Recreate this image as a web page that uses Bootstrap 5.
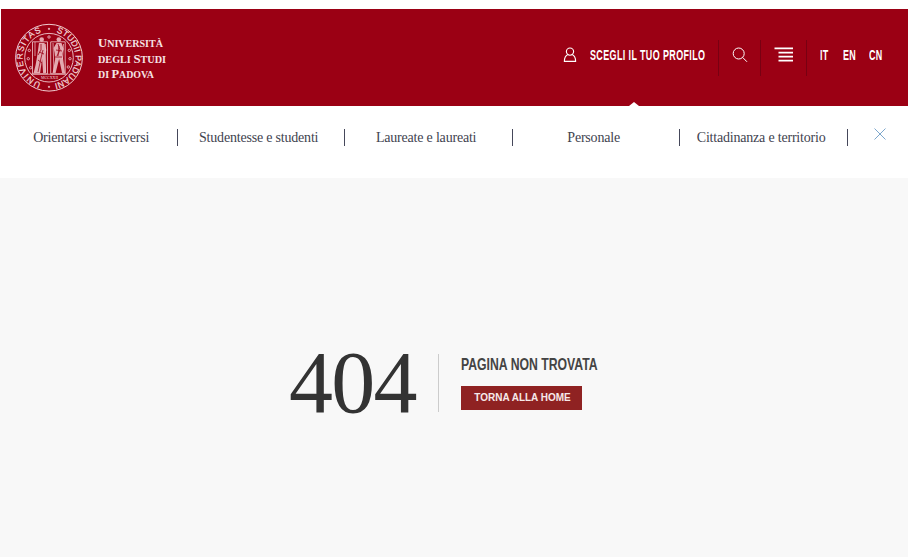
<!DOCTYPE html>
<html lang="it">
<head>
<meta charset="utf-8">
<meta name="viewport" content="width=device-width, initial-scale=1">
<title>Università degli Studi di Padova - 404</title>
<link rel="stylesheet" href="https://cdn.jsdelivr.net/npm/bootstrap@5.3.0/dist/css/bootstrap.min.css">
<style>
body{background:#fff;font-family:"Liberation Sans",Arial,sans-serif;height:557px;overflow:hidden}
.topbar{background:#9b0014;height:97px;margin:9px 0 0 1px;padding:0 26px 0 13px}
.tools{height:38px}
.narrow{flex:none;font-weight:700;font-size:14px;line-height:16px;letter-spacing:.6px;white-space:nowrap;color:#fff;text-decoration:none;margin-top:-5px}
.narrow:hover{color:#fff}
.narrow span{display:block;transform:scaleX(.64);transform-origin:0 50%}
.profile-icon{margin:-5px 13px 0 0}
.profile-label{width:115px;margin-right:13px}
.lang-it{width:23px;margin-left:13px}
.lang-en{width:26px}
.lang-cn{width:13px}
.tool-icon{flex:none;margin-top:-5px}
.sep{flex:none;width:1px;height:36px;background:#780012}
.pointer{left:628px;bottom:0;width:10px;height:4px}
.profiles{height:72px;padding-left:10.4px}
.profiles ul{margin-top:23px}
.profiles li{width:167.5px;height:17px;border-right:1px solid #45475a;padding-right:5px;text-align:center;line-height:16px}
.profiles li a{font:14px/16px "Liberation Serif","Times New Roman",serif;letter-spacing:-.2px;color:#41434f;text-decoration:none;white-space:nowrap}
.close-x{margin:22px 0 0 26px;line-height:0}
main{background:#f8f8f8;height:379px;padding:175px 0 0 289px}
.code{font:88px/60px "Liberation Serif","Times New Roman",serif;color:#333;width:127px;letter-spacing:-1.8px;margin:0}
.message{border-left:1px solid #ccc;margin-left:22px;padding-left:22px;height:58px;margin-top:1px}
.message h2{font-size:16.5px;line-height:20px;font-weight:700;color:#444;white-space:nowrap;transform:scaleX(.742);transform-origin:0 50%;width:137px;margin:0 0 12px}
.home-btn{background:#8f2222;color:#f6e9e9;border-radius:0;width:121px;height:24px;font-size:10px;line-height:24px;font-weight:700;padding:0 0 0 2px;white-space:nowrap;border:0}
.home-btn:hover{background:#8f2222;color:#fff}
</style>
<script src="https://cdn.jsdelivr.net/npm/bootstrap@5.3.0/dist/js/bootstrap.bundle.min.js"></script>
</head>
<body>
<header class="topbar d-flex align-items-center position-relative">
  <a href="#" class="d-block lh-1" aria-label="Università degli Studi di Padova">
    <svg width="160" height="72" viewBox="0 0 160 72" fill="none" stroke="#f0ccd0">
      <defs><path id="ring" d="M35 35.7m0 26.4a26.4 26.4 0 1 1 .01 0"/></defs>
      <circle cx="35" cy="35.7" r="33.4" stroke-width="1"/>
      <circle cx="35" cy="35.7" r="24.3" stroke-width=".9"/>
      <g font-family="Liberation Sans,sans-serif" font-size="8.6" fill="#f3d9dc" stroke="#f3d9dc" stroke-width=".2">
        <text><textPath href="#ring" startOffset="8" textLength="67">UNIVERSITAS</textPath></text>
        <text><textPath href="#ring" startOffset="90" textLength="70">STUDII PADUANI</textPath></text>
        <circle cx="35" cy="6.8" r=".9"/><circle cx="35" cy="64.8" r=".9"/>
      </g>
      <path d="M18.5 19.8h15v32h-15zM36.7 19.8h14.5v32H36.7zM17 52.2h36" stroke-width=".8"/>
      <g stroke-width=".8">
        <circle cx="15.3" cy="28.4" r="1.2"/><circle cx="14.3" cy="36.7" r="1.2"/><circle cx="16.7" cy="45.7" r="1.2"/>
        <circle cx="55.3" cy="28.4" r="1.2"/><circle cx="56" cy="36.7" r="1.2"/><circle cx="54.3" cy="45" r="1.2"/><circle cx="35" cy="15" r="1.2"/>
      </g>
      <g fill="#e3a9b0" stroke="none">
        <circle cx="27.7" cy="17.6" r="2.3"/>
        <path d="M25 21l5.5 0 1.8 7-1.2 5 1 18h-3l-1-14-2 14-6.5 0 2-8 1.6-9z"/>
        <circle cx="44.8" cy="17.6" r="2.3"/>
        <path d="M42.5 21h5l2.2 6-1.6 5 1 5 2 14h-3l-3-14-3.5 14h-3l2.6-14-.6-6-1-5z"/>
      </g>
      <path d="M27 22v6l-3 5M29 28l-2 8-3 14M25 30l5 2M24 38l4 3M44 22l2 6-3 6M42 28l6 1M41 35l7 0M45 24l-1 10" stroke="#9b0014" stroke-width=".8"/>
      <path d="M21 20v14M31.6 22v28M39 21l1 29M49.5 22l-1 15" stroke-width=".7"/>
      <text x="27" y="57" font-family="Liberation Serif,serif" font-size="5" fill="#f3d9dc" stroke="none" textLength="17" lengthAdjust="spacingAndGlyphs">MCCXXII</text>
      <g fill="#f6e3e5" stroke="none" font-family="Liberation Serif,serif" font-weight="700" font-size="10.2">
        <text x="84" y="25" textLength="65" lengthAdjust="spacingAndGlyphs"><tspan font-size="12.8">U</tspan>NIVERSITÀ</text>
        <text x="84" y="40.7" textLength="68" lengthAdjust="spacingAndGlyphs">DEGLI <tspan font-size="12.8">S</tspan>TUDI</text>
        <text x="84" y="56" textLength="56" lengthAdjust="spacingAndGlyphs">DI <tspan font-size="12.8">P</tspan>ADOVA</text>
      </g>
    </svg>
  </a>
  <div class="tools d-flex align-items-center ms-auto">
    <svg class="profile-icon" width="14" height="16" viewBox="0 0 14 16" fill="none" stroke="#fff" stroke-width="1.15"><circle cx="7" cy="4.6" r="3.6"/><path d="M4.8 7.5C2.6 8.6 1.4 10.4 1.4 14.3h11.2c0-3.9-1.2-5.7-3.4-6.8"/></svg>
    <a href="#" class="narrow profile-label"><span>SCEGLI IL TUO PROFILO</span></a>
    <div class="sep"></div>
    <svg class="tool-icon" width="41" height="18" viewBox="0 0 41 18" fill="none" stroke="#fff" stroke-width="1"><circle cx="19.7" cy="7.5" r="5.5"/><path d="M23.6 11.4l4.4 4.4"/></svg>
    <div class="sep"></div>
    <svg class="tool-icon" width="45" height="18" viewBox="0 0 45 18" fill="#fff"><path d="M13.5 1.5h18.5v1.8H13.5zM17.5 5.7H32v1.7H17.5zM17.5 9.7H32v1.7H17.5zM17.5 13.7H32v1.7H17.5z"/></svg>
    <div class="sep"></div>
    <a href="#" class="narrow lang-it"><span>IT</span></a>
    <a href="#" class="narrow lang-en"><span>EN</span></a>
    <a href="#" class="narrow lang-cn"><span>CN</span></a>
  </div>
  <svg class="pointer position-absolute" viewBox="0 0 10 4" preserveAspectRatio="none"><path d="M0 4l5-4 5 4z" fill="#fff"/></svg>
</header>
<nav class="profiles d-flex align-items-start">
  <ul class="list-unstyled d-flex mb-0">
    <li><a href="#">Orientarsi e iscriversi</a></li>
    <li><a href="#">Studentesse e studenti</a></li>
    <li><a href="#">Laureate e laureati</a></li>
    <li><a href="#">Personale</a></li>
    <li><a href="#">Cittadinanza e territorio</a></li>
  </ul>
  <a href="#" class="close-x" aria-label="Chiudi"><svg width="12" height="12" viewBox="0 0 12 12" stroke="#7da7cc" stroke-width="1"><path d="M.5.5l11 11M11.5.5l-11 11"/></svg></a>
</nav>
<main class="d-flex align-items-start">
  <h1 class="code">404</h1>
  <div class="message">
    <h2>PAGINA NON TROVATA</h2>
    <a href="#" class="btn home-btn d-block">TORNA ALLA HOME</a>
  </div>
</main>
</body>
</html>
